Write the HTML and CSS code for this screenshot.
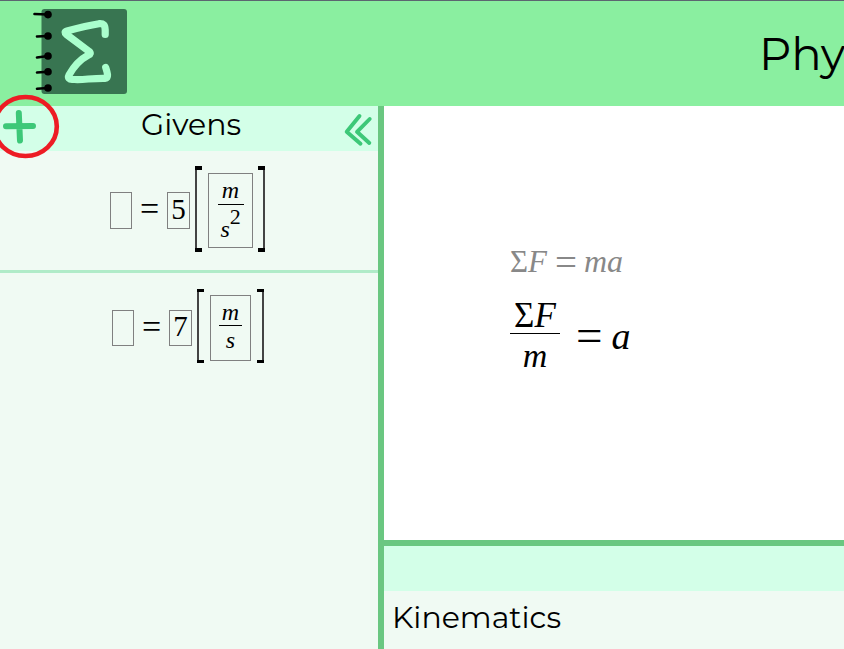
FILE: index.html
```html
<!DOCTYPE html>
<html lang="en">
<head>
<meta charset="utf-8">
<title>Physics</title>
<link rel="stylesheet" href="styles.css">
</head>
<body>
<header class="topbar">
  <svg class="logo" width="96" height="90" viewBox="32 6 96 90">
    <rect x="41.5" y="9" width="85.5" height="85" rx="3" fill="#387551"/>
    <g stroke="#000" stroke-width="2.6" stroke-linecap="round">
      <path d="M34.5 14L48 14.5M37 36.5L48 36M37 57.5L48 56M37 72.5L48 71.7M37 88.7L48 88"/>
    </g>
    <circle cx="48" cy="14.6" r="3.8"/><circle cx="48" cy="36" r="3.8"/><circle cx="48" cy="56" r="3.8"/><circle cx="48" cy="71.7" r="3.8"/><circle cx="48" cy="88" r="3.8"/>
    <path d="M105.2 34.500V30C105 25 103.500 23.300 99 23.700C87 25.500 76 28.500 67 31C64.500 31.700 64.500 33 66.500 34.500L89 51.300C91 53 90.500 54 88.500 55C79 60 74 66 69 75C67.500 78 69.500 79.300 72 79.300C82 80.500 91 78 105 78.300C109 78.500 107.500 73 105.700 67.500" fill="none" stroke="#aaffcd" stroke-width="7.200" stroke-linecap="round" stroke-linejoin="round"/>
  </svg>
  <h1 class="title">Phy</h1>
</header>
<main class="workspace">
  <aside class="sidebar">
    <div class="panel-head">
      <svg class="add" width="38" height="40" viewBox="0 106 38 40">
        <path d="M6 126.300L33 126M18.800 113L20 140.500" stroke="#3dc878" stroke-width="6" stroke-linecap="round"/>
      </svg>
      <h2 class="label givens">Givens</h2>
      <svg class="collapse" width="34" height="36" viewBox="342 112 34 36">
        <path d="M359.500 116L346.700 131.800L360.500 143.800M369.700 119L357 131.800L369.300 143" fill="none" stroke="#3dc878" stroke-width="3.900" stroke-linecap="round" stroke-linejoin="round"/>
      </svg>
    </div>
    <div class="given first">
      <span class="box"></span><span class="eq">=</span><span class="box value">5</span>
      <span class="unit">
        <span class="bracket left"></span>
        <span class="fraction"><i class="num">m</i><i class="den">s<sup>2</sup></i></span>
        <span class="bracket right"></span>
      </span>
    </div>
    <div class="given second">
      <span class="box"></span><span class="eq">=</span><span class="box value">7</span>
      <span class="unit">
        <span class="bracket left"></span>
        <span class="fraction"><i class="num">m</i><i class="den">s</i></span>
        <span class="bracket right"></span>
      </span>
    </div>
  </aside>
  <section class="content">
    <div class="canvas">
      <div class="previous"><span>Σ</span><i>F</i><span class="sign">=</span><i class="product">ma</i></div>
      <div class="current">
        <span class="quotient"><span class="top">Σ<i>F</i></span><i class="bottom">m</i></span>
        <span class="equals">=</span><i class="result">a</i>
      </div>
    </div>
    <div class="equations">
      <div class="strip"></div>
      <h2 class="label kinematics">Kinematics</h2>
    </div>
  </section>
</main>
<svg class="highlight" width="62" height="66" viewBox="0 93 62 66">
  <ellipse cx="25.500" cy="126.500" rx="31.300" ry="29.500" fill="none" stroke="#ed1c24" stroke-width="4.600"/>
</svg>
</body>
</html>
```
FILE: styles.css
```css
* { box-sizing: border-box; }
body { margin: 0; width: 844px; height: 649px; overflow: hidden; position: relative; background: #fff; color: #000; font-family: "Liberation Serif", serif; }
h1, h2 { margin: 0; font-family: Montserrat, Inter, sans-serif; font-weight: 400; white-space: nowrap; }
svg { display: block; flex: none; }
.topbar { height: 106px; display: flex; border-top: 1px solid #5c6670; background: #8aefa0; overflow: hidden; }
.logo { margin: 5px 0 0 32px; }
.title { margin-left: 631px; margin-top: 26px; font-size: 45px; line-height: 54px; }
.workspace { display: flex; height: 543px; }
.sidebar { width: 384px; border-right: 6px solid #6ac781; background: #f0faf3; }
.panel-head { height: 45px; display: flex; background: #d3ffe8; }
.label { font-size: 30px; line-height: 37px; }
.givens { width: 199px; margin-left: 103px; }
.collapse { margin-top: 6px; margin-left: 2px; }
.given { display: flex; align-items: center; }
.first { height: 122px; padding-left: 110px; border-bottom: 3px solid #b0ebc8; }
.second { height: 106px; padding-left: 112px; }
.box { width: 22px; height: 37px; border: 1px solid #808080; flex: none; }
.second .box { height: 36px; margin-top: 3px; }
.value { width: 23px; font-size: 29px; line-height: 33px; text-align: center; }
.second .value { line-height: 31px; }
.eq { width: 35px; font-size: 34px; line-height: 34px; text-align: center; padding-bottom: 3px; }
.second .eq { padding-bottom: 0; margin-top: 1px; }
.unit { display: flex; align-items: center; margin-left: 5px; height: 86px; }
.first .bracket { margin-bottom: 3px; }
.second .unit { height: 74px; }
.bracket { width: 7px; height: 100%; border: 0 solid #000; border-top-width: 4px; border-bottom-width: 4px; background: linear-gradient(#444, #444) left / 2px 100% no-repeat; }
.bracket.right { background-position: right; }
.second .bracket { border-top-width: 3px; border-bottom-width: 3px; }
.fraction { width: 45px; height: 75px; margin: 0 5px 0 6px; border: 1px solid #808080; display: flex; flex-direction: column; align-items: center; font-size: 24px; }
.num { width: 26px; height: 31px; border-bottom: 1px solid #000; line-height: 32px; text-align: center; }
.den { width: 26px; line-height: 49px; padding-left: 3px; height: 40px; }
.den sup { font-style: normal; font-size: 22px; line-height: 0; vertical-align: 13px; }
.second .fraction { width: 41px; height: 66px; margin: 4px 6px 0; }
.second .den { line-height: 29px; padding: 0; text-align: center; }
.second .num { width: 23px; height: 30px; }
.content { flex: 1; min-width: 0; }
.canvas { height: 434px; padding: 137px 0 0 126px; }
.previous { display: flex; height: 36px; line-height: 37px; color: #888; font-size: 31px; }
.sign { margin: 0 7px 0 8px; font-size: 39px; line-height: 40px; }
.product { font-size: 32px; }
.current { display: flex; height: 80px; margin-top: 17px; font-size: 35px; }
.quotient { width: 50px; text-align: center; }
.top { display: block; height: 38px; line-height: 39px; border-bottom: 1px solid #000; }
.bottom { display: block; line-height: 43px; font-size: 34px; }
.equals { margin-left: 16px; font-size: 47px; line-height: 78px; }
.result { margin-left: 9px; line-height: 80px; font-size: 38px; }
.equations { height: 109px; border-top: 6px solid #6ac781; background: #f0faf3; }
.strip { height: 45px; background: #d3ffe8; }
.kinematics { margin: 8px 0 0 8px; }
.highlight { position: absolute; left: 0; top: 93px; }
```
